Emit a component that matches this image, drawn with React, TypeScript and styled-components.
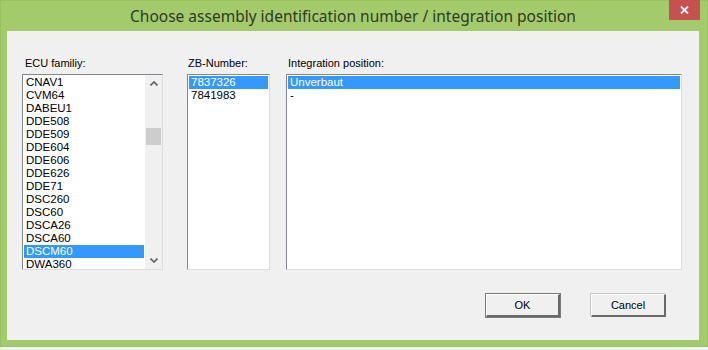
import * as React from "react";
import styled, {createGlobalStyle} from "styled-components";

const GlobalStyle = createGlobalStyle`
  html, body {
    margin: 0;
    padding: 0;
    background: #f3f3f3;
  }
  body {
    width: 708px;
    height: 350px;
    overflow: hidden;
  }
`

const ecuList = [
    "CNAV1", "CVM64", "DABEU1", "DDE508", "DDE509", "DDE604", "DDE606", "DDE626",
    "DDE71", "DSC260", "DSC60", "DSCA26", "DSCA60", "DSCM60", "DWA360",
]
const zbList = ["7837326", "7841983"]
const positionList = ["Unverbaut", "-"]

function Chevron(props: { down?: boolean }) {
    return (
        <svg width="8" height="5" viewBox="0 0 8 5">
            <path d={props.down ? "M0.5 0.5 L4 4 L7.5 0.5" : "M0.5 4.5 L4 1 L7.5 4.5"}
                  fill="none" stroke="#606060" strokeWidth="1.6"/>
        </svg>
    )
}

interface ListProps {
    items: string[]
    selected: number
    width: number
    scroll?: boolean
}

function ListBox(props: ListProps) {
    const {items, selected, width, scroll} = props
    return (
        <Box style={{width}}>
            <Rows>
                {items.map((item, i) => (
                    <Row key={item + i} $selected={i === selected}>{item}</Row>
                ))}
            </Rows>
            {scroll && (
                <ScrollBar>
                    <ArrowCell><Chevron/></ArrowCell>
                    <Track>
                        <Thumb/>
                    </Track>
                    <ArrowCell><Chevron down/></ArrowCell>
                </ScrollBar>
            )}
        </Box>
    )
}

export default function App() {
    return (
        <>
            <GlobalStyle/>
            <Frame>
                <TitleBar>
                    <span/>
                    <Title>Choose assembly identification number / integration position</Title>
                    <CloseButton>
                        <svg width="9" height="8" viewBox="0 0 9 8">
                            <path d="M1 0.5 L8 7.5 M8 0.5 L1 7.5" stroke="#ffffff" strokeWidth="1.8"/>
                        </svg>
                    </CloseButton>
                </TitleBar>
                <Client>
                    <Columns>
                        <Column>
                            <Label $indent={3}>ECU familiy:</Label>
                            <ListBox items={ecuList} selected={13} width={141} scroll/>
                        </Column>
                        <Column>
                            <Label $indent={1}>ZB-Number:</Label>
                            <ListBox items={zbList} selected={0} width={83}/>
                        </Column>
                        <Column>
                            <Label $indent={2}>Integration position:</Label>
                            <ListBox items={positionList} selected={0} width={396}/>
                        </Column>
                    </Columns>
                    <ButtonRow>
                        <DialogButton $default>OK</DialogButton>
                        <DialogButton>Cancel</DialogButton>
                    </ButtonRow>
                </Client>
            </Frame>
        </>
    )
}

const Frame = styled.div`
  width: 708px;
  height: 347px;
  box-sizing: border-box;
  background: #a3cb6b;
  border: 1px solid #98c25e;
  padding: 0 8px 6px 6px;
  display: flex;
  flex-direction: column;
`

const TitleBar = styled.div`
  height: 30px;
  display: grid;
  grid-template-columns: 1fr auto 1fr;
  align-items: start;
`

const Title = styled.div`
  font-family: "Noto Sans", "Open Sans", sans-serif;
  font-size: 15.5px;
  color: #2f3a26;
  line-height: 30px;
  white-space: nowrap;
`

const CloseButton = styled.div`
  justify-self: end;
  margin-top: -1px;
  margin-right: -1px;
  width: 31px;
  height: 20px;
  background: #c75050;
  display: flex;
  align-items: center;
  justify-content: center;
`

const Client = styled.div`
  flex: 1;
  background: #f0f0f0;
  padding: 26px 17px 0 15px;
  display: flex;
  flex-direction: column;
  font-family: "Liberation Sans", Arial, sans-serif;
  font-size: 11px;
  color: #000000;
`

const Columns = styled.div`
  display: flex;
  align-items: flex-start;
  gap: 24px;

  & > div:last-child {
    margin-left: -8px;
  }
`

const Column = styled.div`
  display: flex;
  flex-direction: column;
`

const Label = styled.div<{ $indent: number }>`
  height: 17px;
  line-height: 12px;
  padding-left: ${p => p.$indent}px;
`

const Box = styled.div`
  height: 196px;
  box-sizing: border-box;
  background: #ffffff;
  border-top: 1px solid #828790;
  border-left: 1px solid #828790;
  border-right: 1px solid #dcdcdc;
  border-bottom: 1px solid #dcdcdc;
  display: flex;
  overflow: hidden;
`

const Rows = styled.div`
  flex: 1;
  padding: 1px;
  overflow: hidden;
`

const Row = styled.div<{ $selected: boolean }>`
  height: 13px;
  line-height: 13px;
  padding-left: 2px;
  font-size: 11.5px;
  white-space: nowrap;
  background: ${p => p.$selected ? "#3399ff" : "transparent"};
  color: ${p => p.$selected ? "#ffffff" : "#000000"};
`

const ScrollBar = styled.div`
  width: 17px;
  background: #f0f0f0;
  display: flex;
  flex-direction: column;
`

const ArrowCell = styled.div`
  height: 17px;
  display: flex;
  align-items: center;
  justify-content: center;
`

const Track = styled.div`
  flex: 1;
  padding-top: 36px;
`

const Thumb = styled.div`
  margin: 0 1px;
  height: 17px;
  background: #cdcdcd;
`

const ButtonRow = styled.div`
  display: flex;
  justify-content: flex-end;
  gap: 31px;
  margin-top: 24px;
  padding-right: 16px;
`

const DialogButton = styled.div<{ $default?: boolean }>`
  width: ${p => p.$default ? 74 : 75}px;
  height: 23px;
  box-sizing: border-box;
  background: #f0f0f0;
  border-top: 1px solid #ffffff;
  border-left: 1px solid #ffffff;
  border-right: 2px solid #696969;
  border-bottom: 2px solid #696969;
  outline: ${p => p.$default ? "1px solid #7a7a7a" : "none"};
  box-shadow: ${p => p.$default ? "none" : "-1px -1px 0 #c8c8c8"};
  display: flex;
  align-items: center;
  justify-content: center;
  font-size: 11px;
`
